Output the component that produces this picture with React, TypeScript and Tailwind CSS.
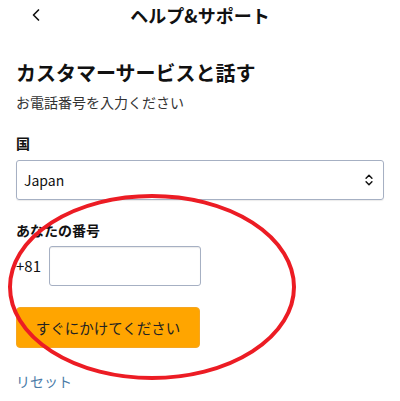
import { ChevronLeft, ChevronsUpDown } from 'lucide-react';

const font = { fontFamily: '"Noto Sans CJK JP", "Noto Sans", sans-serif' };

function Header() {
  return (
    <div className="relative flex h-[30px] items-center justify-center">
      <ChevronLeft className="absolute left-[26px] top-[5px] h-5 w-5 text-[#111]" strokeWidth={2} />
      <p className="text-[18px] font-bold text-[#111]">ヘルプ&amp;サポート</p>
    </div>
  );
}

function Annotation() {
  return (
    <svg className="pointer-events-none absolute left-0 top-0" width="400" height="401">
      <ellipse cx="152" cy="287" rx="142" ry="91" fill="none" stroke="#ec1c24" strokeWidth="4" />
    </svg>
  );
}

export default function App() {
  return (
    <div className="relative h-[401px] w-[400px] overflow-hidden bg-white" style={font}>
      <Header />
      <div className="px-4">
        <h1 className="mt-[30px] text-[20px] font-bold leading-[26px] text-[#111]">
          カスタマーサービスと話す
        </h1>
        <p className="mt-[6px] text-[14px] leading-[20px] text-[#333]">お電話番号を入力ください</p>

        <p className="mt-[21px] text-[14px] font-bold leading-[20px] text-[#111]">国</p>
        <div className="mt-[7px] flex h-[40px] items-center justify-between rounded-[3px] border border-[#a6b0c3] px-[7px] shadow-[0_1px_1px_rgba(0,0,0,0.08)]">
          <span className="text-[14px] text-[#111]">Japan</span>
          <ChevronsUpDown className="h-[14px] w-[14px] text-[#111]" strokeWidth={2.5} />
        </div>

        <p className="mt-[20px] text-[14px] font-bold leading-[20px] text-[#111]">あなたの番号</p>
        <div className="mt-[6px] flex items-center gap-[8px]">
          <span className="text-[15px] text-[#111]">+81</span>
          <div className="h-[40px] w-[152px] rounded-[3px] border border-[#a6b0c3] shadow-[inset_0_1px_1px_rgba(0,0,0,0.08)]" />
        </div>

        <button
          type="button"
          className="mt-[21px] flex h-[41px] w-[184px] items-center justify-center rounded-[4px] border border-[#f5a623] bg-[#ffa500] text-[14.5px] text-[#222]"
        >
          すぐにかけてください
        </button>

        <p className="mt-[23px] text-[14px] leading-[20px] text-[#4a7ba7]">リセット</p>
      </div>
      <Annotation />
    </div>
  );
}
